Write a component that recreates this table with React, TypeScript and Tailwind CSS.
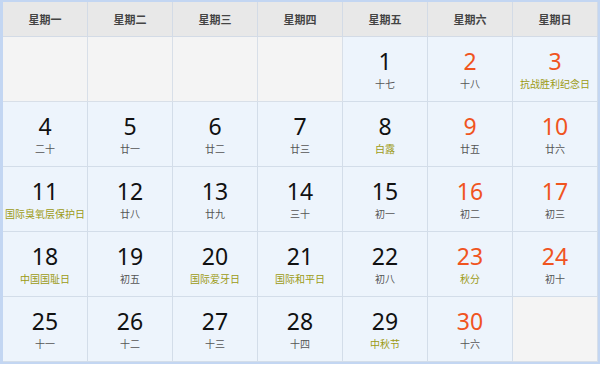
import React from "react";

// September calendar grid: weekday header + 5 week rows of 7 day cells.
type Day = { n: number; sub: string; red?: boolean; fest?: boolean } | null;

const HEAD = ["星期一", "星期二", "星期三", "星期四", "星期五", "星期六", "星期日"];

const DAYS: Day[] = [
  null, null, null, null,
  { n: 1, sub: "十七" },
  { n: 2, sub: "十八", red: true },
  { n: 3, sub: "抗战胜利纪念日", red: true, fest: true },
  { n: 4, sub: "二十" },
  { n: 5, sub: "廿一" },
  { n: 6, sub: "廿二" },
  { n: 7, sub: "廿三" },
  { n: 8, sub: "白露", fest: true },
  { n: 9, sub: "廿五", red: true },
  { n: 10, sub: "廿六", red: true },
  { n: 11, sub: "国际臭氧层保护日", fest: true },
  { n: 12, sub: "廿八" },
  { n: 13, sub: "廿九" },
  { n: 14, sub: "三十" },
  { n: 15, sub: "初一" },
  { n: 16, sub: "初二", red: true },
  { n: 17, sub: "初三", red: true },
  { n: 18, sub: "中国国耻日", fest: true },
  { n: 19, sub: "初五" },
  { n: 20, sub: "国际爱牙日", fest: true },
  { n: 21, sub: "国际和平日", fest: true },
  { n: 22, sub: "初八" },
  { n: 23, sub: "秋分", red: true, fest: true },
  { n: 24, sub: "初十", red: true },
  { n: 25, sub: "十一" },
  { n: 26, sub: "十二" },
  { n: 27, sub: "十三" },
  { n: 28, sub: "十四" },
  { n: 29, sub: "中秋节", fest: true },
  { n: 30, sub: "十六", red: true },
  null,
];

const CJK = "font-['Noto_Sans_CJK_SC',sans-serif]";

export default function App() {
  return (
    <div className="h-[366px] w-[600px] bg-white">
      <div className="h-[364px] w-[600px] border-t-2 border-b-2 border-l-[3px] border-r-2 border-[#c3d6f2] bg-[#e9e9e9]">
        <div className="grid grid-cols-7">
          {HEAD.map((h) => (
            <div
              key={h}
              className={`flex h-[35px] items-center justify-center border-r border-b border-[#d3dbe6] bg-[#e8e8e8] text-[11px] font-bold text-[#444] ${CJK}`}
            >
              {h}
            </div>
          ))}
          {DAYS.map((d, i) =>
            d ? (
              <div
                key={i}
                className="flex h-[65px] flex-col items-center border-r border-b border-[#d3dde9] bg-[#edf4fc] pt-[8px]"
              >
                <span
                  className={`font-['Noto_Sans',sans-serif] text-[23px] leading-[32px] ${
                    d.red ? "text-[#f0541f]" : "text-[#111]"
                  }`}
                >
                  {d.n}
                </span>
                <span
                  className={`whitespace-nowrap text-[10px] leading-[14px] ${CJK} ${
                    d.fest ? "text-[#9c9a14]" : "text-[#555]"
                  }`}
                >
                  {d.sub}
                </span>
              </div>
            ) : (
              <div key={i} className="h-[65px] border-r border-b border-[#d8dfe8] bg-[#f4f4f4]" />
            )
          )}
        </div>
      </div>
    </div>
  );
}
